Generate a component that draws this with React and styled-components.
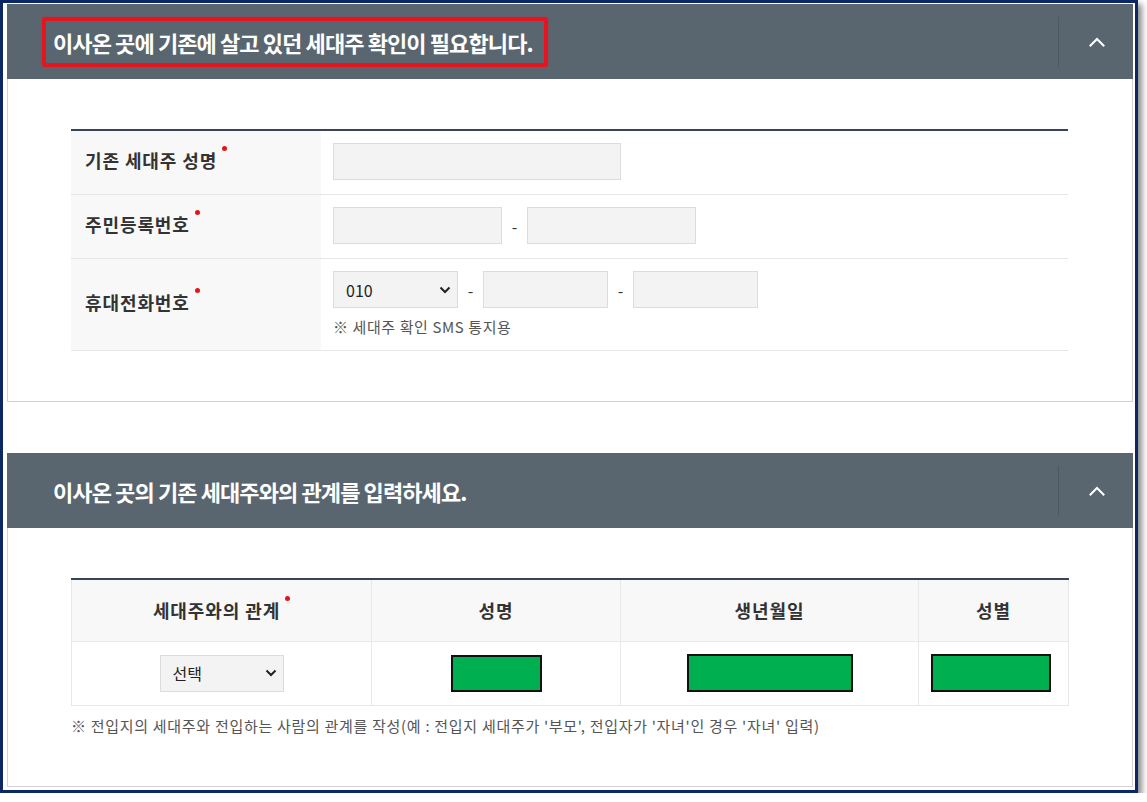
import React from "react"
import styled, { createGlobalStyle } from "styled-components"

const GlobalStyle = createGlobalStyle`
  html, body {
    margin: 0;
    padding: 0;
    background: #ffffff;
  }
  body {
    font-family: "Noto Sans CJK KR", "Noto Sans", sans-serif;
    color: #333;
  }
  * {
    box-sizing: border-box;
  }
`

const Chevron = ({ size = 20, color = "#fff", stroke = 2 }) => (
  <svg width={size} height={size} viewBox="0 0 20 20" fill="none">
    <path
      d="M3.5 13.5 L10 7 L16.5 13.5"
      stroke={color}
      strokeWidth={stroke}
      strokeLinecap="square"
    />
  </svg>
)

const SmallDown = () => (
  <svg width="12" height="8" viewBox="0 0 12 8" fill="none">
    <path d="M1.5 1.5 L6 6 L10.5 1.5" stroke="#222" strokeWidth="2" />
  </svg>
)

const Section = ({ title, highlight, children }) => (
  <StyledSection>
    <StyledHeader>
      <StyledTitle highlight={highlight}>{title}</StyledTitle>
      <StyledToggle>
        <Chevron />
      </StyledToggle>
    </StyledHeader>
    <StyledBody>{children}</StyledBody>
  </StyledSection>
)

const SelectBox = ({ value, width }) => (
  <StyledSelectWrap width={width}>
    <StyledSelect defaultValue={value}>
      <option>{value}</option>
    </StyledSelect>
    <StyledSelectIcon>
      <SmallDown />
    </StyledSelectIcon>
  </StyledSelectWrap>
)

const App = () => {
  return (
    <>
      <GlobalStyle />
      <StyledFrame>
        <Section title="이사온 곳에 기존에 살고 있던 세대주 확인이 필요합니다." highlight>
          <StyledFormTable>
            <tbody>
              <tr>
                <StyledLabel>
                  <StyledRequired>기존 세대주 성명</StyledRequired>
                </StyledLabel>
                <StyledField>
                  <StyledInput width={288} />
                </StyledField>
              </tr>
              <tr>
                <StyledLabel>
                  <StyledRequired>주민등록번호</StyledRequired>
                </StyledLabel>
                <StyledField>
                  <StyledInline>
                    <StyledInput width={169} />
                    <StyledDash>-</StyledDash>
                    <StyledInput width={169} />
                  </StyledInline>
                </StyledField>
              </tr>
              <tr>
                <StyledLabel>
                  <StyledRequired>휴대전화번호</StyledRequired>
                </StyledLabel>
                <StyledField tall>
                  <StyledInline>
                    <SelectBox value="010" width={125} />
                    <StyledDash>-</StyledDash>
                    <StyledInput width={125} />
                    <StyledDash>-</StyledDash>
                    <StyledInput width={125} />
                  </StyledInline>
                  <StyledHint>※ 세대주 확인 SMS 통지용</StyledHint>
                </StyledField>
              </tr>
            </tbody>
          </StyledFormTable>
        </Section>

        <Section title="이사온 곳의 기존 세대주와의 관계를 입력하세요.">
          <StyledGridTable>
            <thead>
              <tr>
                <StyledTh width={300}>
                  <StyledRequired>세대주와의 관계</StyledRequired>
                </StyledTh>
                <StyledTh width={249}>성명</StyledTh>
                <StyledTh width={298}>생년월일</StyledTh>
                <StyledTh width={150}>성별</StyledTh>
              </tr>
            </thead>
            <tbody>
              <tr>
                <StyledTd>
                  <StyledCenter>
                    <SelectBox value="선택" width={124} />
                  </StyledCenter>
                </StyledTd>
                <StyledTd>
                  <StyledCenter>
                    <StyledMask width={91} height={37} />
                  </StyledCenter>
                </StyledTd>
                <StyledTd>
                  <StyledCenter>
                    <StyledMask width={166} height={38} />
                  </StyledCenter>
                </StyledTd>
                <StyledTd>
                  <StyledCenter shift={-6}>
                    <StyledMask width={120} height={38} />
                  </StyledCenter>
                </StyledTd>
              </tr>
            </tbody>
          </StyledGridTable>
          <StyledNote>
            ※ 전입지의 세대주와 전입하는 사람의 관계를 작성(예 : 전입지 세대주가 '부모', 전입자가 '자녀'인 경우 '자녀' 입력)
          </StyledNote>
        </Section>
      </StyledFrame>
    </>
  )
}

export default App

const StyledFrame = styled.div`
  width: 1138px;
  height: 793px;
  border: 3px solid #0c2862;
  padding: 1px 2px 0 4px;
  background: #fff;
  box-shadow: 4px 4px 6px rgba(0, 0, 0, 0.45);
  display: flex;
  flex-direction: column;
  gap: 51px;
`

const StyledSection = styled.section`
  display: flex;
  flex-direction: column;
`

const StyledHeader = styled.div`
  height: 75px;
  background: #5a666f;
  display: flex;
  align-items: center;
  justify-content: space-between;
  padding-left: 35px;
`

const StyledTitle = styled.h2`
  margin: 0;
  font-size: 22px;
  font-weight: 700;
  color: #fff;
  letter-spacing: -0.9px;
  line-height: 42px;
  padding: 0 11px 0 7px;
  border: 4px solid ${props => (props.highlight ? "#e4151f" : "transparent")};
  border-radius: 3px;
  box-shadow: ${props =>
    props.highlight ? "0 0 2px rgba(228, 21, 31, 0.6)" : "none"};
`

const StyledToggle = styled.div`
  width: 75px;
  height: 50px;
  border-left: 1px solid #4b5867;
  display: flex;
  align-items: center;
  justify-content: center;
  padding-left: 2px;
`

const StyledBody = styled.div`
  border: 1px solid #d2d2d2;
  border-top: none;
  padding: 50px 64px 50px 63px;
`

const StyledFormTable = styled.table`
  width: 100%;
  border-collapse: collapse;
  border-top: 2px solid #34445c;

  tr {
    border-bottom: 1px solid #e6e6e6;
  }
`

const StyledLabel = styled.th`
  width: 250px;
  background: #f8f8f8;
  text-align: left;
  padding: 0 14px 5px;
  font-size: 18px;
  font-weight: 700;
  color: #333;
  letter-spacing: 0.9px;
`

const StyledRequired = styled.span`
  position: relative;
  display: inline-block;
  padding-right: 10px;

  &::after {
    content: "";
    position: absolute;
    right: 0;
    top: -1px;
    width: 5px;
    height: 5px;
    border-radius: 50%;
    background: #e3141e;
  }
`

const StyledField = styled.td`
  padding: ${props => (props.tall ? "12px 12px 13px" : "12px 12px 14px")};
`

const StyledInline = styled.div`
  display: flex;
  align-items: center;
`

const StyledInput = styled.input`
  width: ${props => props.width}px;
  height: 37px;
  background: #f3f3f3;
  border: 1px solid #dcdcdc;
  outline: none;
  padding: 0 12px;
  font-family: inherit;
  font-size: 15px;
`

const StyledDash = styled.span`
  width: 25px;
  text-align: center;
  font-size: 16px;
  color: #333;
`

const StyledSelectWrap = styled.div`
  position: relative;
  width: ${props => props.width}px;
  height: 37px;
`

const StyledSelect = styled.select`
  appearance: none;
  width: 100%;
  height: 100%;
  background: #f3f3f3;
  border: 1px solid #dcdcdc;
  border-radius: 0;
  padding: 0 12px;
  font-family: "Noto Sans CJK KR", "Noto Sans", sans-serif;
  font-size: 16px;
  color: #222;
  outline: none;
`

const StyledSelectIcon = styled.span`
  position: absolute;
  right: 7px;
  top: 50%;
  transform: translateY(-50%);
  display: flex;
  pointer-events: none;
`

const StyledHint = styled.div`
  margin-top: 8px;
  font-size: 15px;
  color: #555;
  letter-spacing: 0.6px;
`

const StyledGridTable = styled.table`
  width: 100%;
  border-collapse: collapse;
  border-top: 2px solid #34445c;
  table-layout: fixed;
`

const StyledTh = styled.th`
  width: ${props => props.width}px;
  height: 62px;
  background: #f8f8f8;
  border: 1px solid #e8e8e8;
  border-top: none;
  font-size: 18px;
  font-weight: 700;
  color: #333;
  letter-spacing: 0.9px;
`

const StyledTd = styled.td`
  height: 64px;
  border: 1px solid #e8e8e8;
  padding: 0;
`

const StyledCenter = styled.div`
  display: flex;
  justify-content: center;
  align-items: center;
  margin-left: ${props => props.shift || 0}px;
`

const StyledMask = styled.div`
  width: ${props => props.width}px;
  height: ${props => props.height}px;
  background: #00b050;
  border: 2px solid #111;
`

const StyledNote = styled.p`
  margin: 9px 0 0;
  font-size: 15px;
  color: #555;
  letter-spacing: 0.7px;
`
